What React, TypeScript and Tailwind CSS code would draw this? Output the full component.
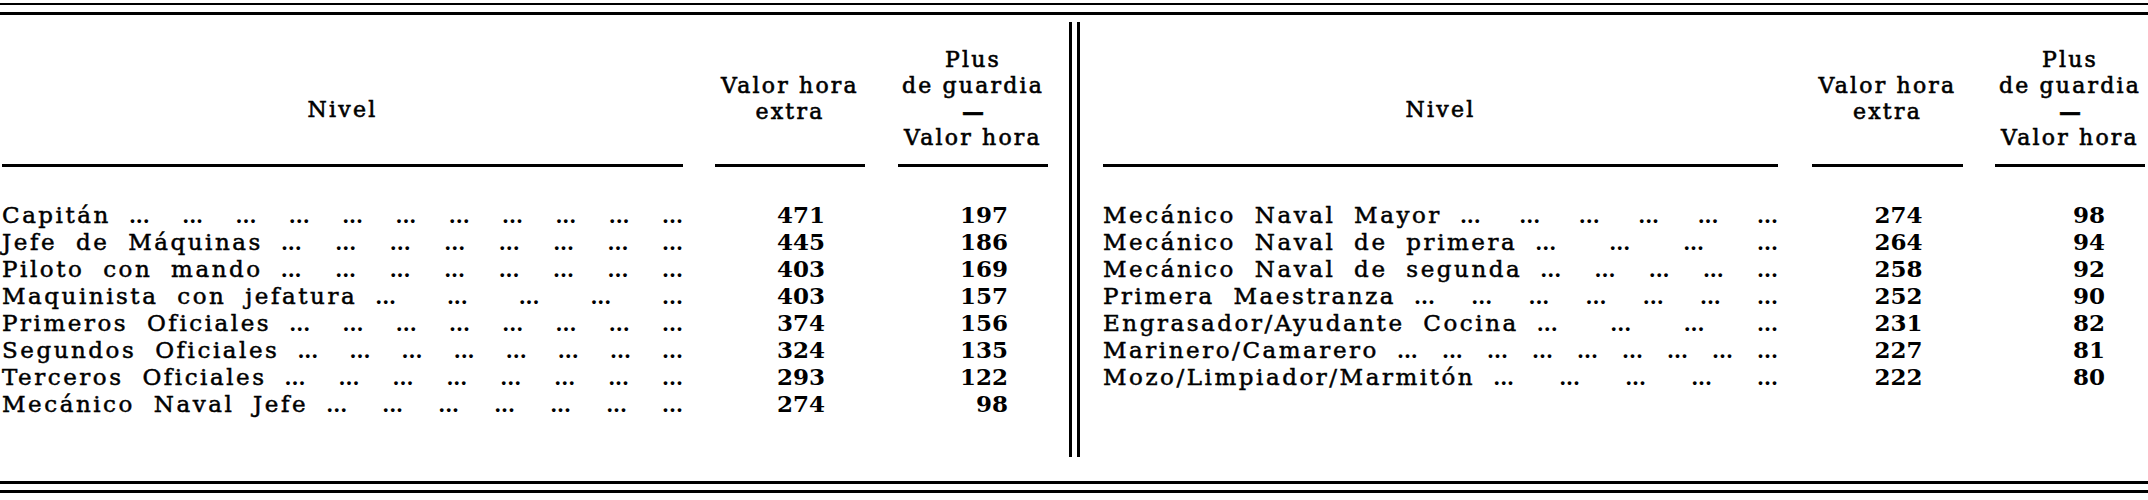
import React from 'react'

// Tabla de valor hora extra y plus de guardia — dos mitades separadas por doble filete.

type Row = { label: string; dots: number; extra: number; plus: number }

const LEFT_ROWS: Row[] = [
  { label: 'Capitán', dots: 11, extra: 471, plus: 197 },
  { label: 'Jefe de Máquinas', dots: 8, extra: 445, plus: 186 },
  { label: 'Piloto con mando', dots: 8, extra: 403, plus: 169 },
  { label: 'Maquinista con jefatura', dots: 5, extra: 403, plus: 157 },
  { label: 'Primeros Oficiales', dots: 8, extra: 374, plus: 156 },
  { label: 'Segundos Oficiales', dots: 8, extra: 324, plus: 135 },
  { label: 'Terceros Oficiales', dots: 8, extra: 293, plus: 122 },
  { label: 'Mecánico Naval Jefe', dots: 7, extra: 274, plus: 98 },
]

const RIGHT_ROWS: Row[] = [
  { label: 'Mecánico Naval Mayor', dots: 6, extra: 274, plus: 98 },
  { label: 'Mecánico Naval de primera', dots: 4, extra: 264, plus: 94 },
  { label: 'Mecánico Naval de segunda', dots: 5, extra: 258, plus: 92 },
  { label: 'Primera Maestranza', dots: 7, extra: 252, plus: 90 },
  { label: 'Engrasador/Ayudante Cocina', dots: 4, extra: 231, plus: 82 },
  { label: 'Marinero/Camarero', dots: 9, extra: 227, plus: 81 },
  { label: 'Mozo/Limpiador/Marmitón', dots: 5, extra: 222, plus: 80 },
]

type Cols = { wrap: string; nivel: string; val: string; plus: string }

const LEFT_COLS: Cols = {
  wrap: 'w-[1069px] pl-[2px]',
  nivel: 'w-[681px]',
  val: 'ml-[32px] w-[150px]',
  plus: 'ml-[33px] w-[150px]',
}

const RIGHT_COLS: Cols = {
  wrap: 'w-[1068px] pl-[23px]',
  nivel: 'w-[675px]',
  val: 'ml-[34px] w-[151px]',
  plus: 'ml-[32px] w-[150px]',
}

function Half({ cols, rows }: { cols: Cols; rows: Row[] }) {
  return (
    <div className={'flex shrink-0 flex-col ' + cols.wrap}>
      {/* ── Cabecera ── */}
      <div className="flex h-[145px] text-[22px] tracking-[0.1em] [-webkit-text-stroke:0.6px_black]">
        <div className={'flex items-center justify-center border-b-[3px] border-black pt-[34px] leading-[26px] ' + cols.nivel}>
          Nivel
        </div>
        <div className={'flex flex-col items-center justify-center border-b-[3px] border-black pt-[12px] leading-[26px] ' + cols.val}>
          <span className="whitespace-nowrap">Valor hora</span>
          <span>extra</span>
        </div>
        <div className={'flex flex-col items-center justify-center border-b-[3px] border-black pt-[12px] leading-[26px] ' + cols.plus}>
          <span>Plus</span>
          <span className="whitespace-nowrap">de guardia</span>
          <span className="font-bold tracking-normal">—</span>
          <span className="whitespace-nowrap">Valor hora</span>
        </div>
      </div>

      {/* ── Filas ── */}
      <div className="mt-[34px] flex flex-col">
        {rows.map(r => (
          <div key={r.label} className="flex h-[27px] items-baseline leading-[27px]">
            <div className={'flex items-baseline whitespace-nowrap ' + cols.nivel}>
              <span className="text-[23px] tracking-[0.11em] [-webkit-text-stroke:0.5px_black] [word-spacing:9px]">
                {r.label}
              </span>
              <span className="ml-[18px] flex flex-1 justify-between text-[20px] font-bold">
                {Array.from({ length: r.dots }).map((_, i) => (
                  <span key={i}>...</span>
                ))}
              </span>
            </div>
            <div className={'flex justify-center ' + cols.val}>
              <span className="w-[70px] text-right text-[23px] font-bold">{r.extra}</span>
            </div>
            <div className={'flex justify-center ' + cols.plus}>
              <span className="w-[70px] text-right text-[23px] font-bold">{r.plus}</span>
            </div>
          </div>
        ))}
      </div>
    </div>
  )
}

export default function App() {
  return (
    <div className="h-[500px] w-[2148px] overflow-hidden bg-white font-['DejaVu_Serif',serif] text-black">
      {/* filetes superiores */}
      <div className="pt-[3px]">
        <div className="h-[2px] bg-black" />
        <div className="mt-[7px] h-[3px] bg-black" />
      </div>

      <div className="mt-[7px] flex h-[435px]">
        <Half cols={LEFT_COLS} rows={LEFT_ROWS} />
        <div className="w-[3px] shrink-0 bg-black" />
        <div className="ml-[5px] w-[3px] shrink-0 bg-black" />
        <Half cols={RIGHT_COLS} rows={RIGHT_ROWS} />
      </div>

      {/* filetes inferiores */}
      <div className="mt-[24px] h-[3px] bg-black" />
      <div className="mt-[6px] h-[3px] bg-black" />
    </div>
  )
}
